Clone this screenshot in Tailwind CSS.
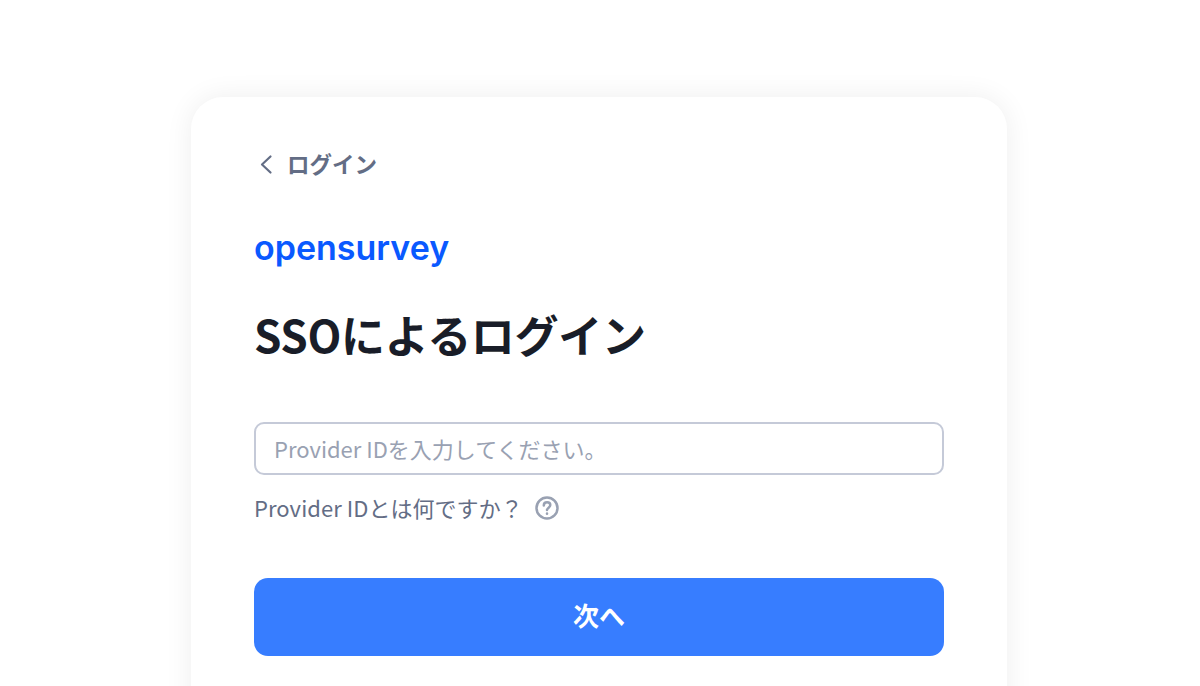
<!DOCTYPE html>
<html lang="ja">
<head>
<meta charset="utf-8">
<title>SSOによるログイン</title>
<script src="https://cdn.jsdelivr.net/npm/@tailwindcss/browser@4"></script>
</head>
<body class="bg-white font-['Noto_Sans_CJK_JP','Noto_Sans',sans-serif] h-[686px] overflow-hidden">
  <div class="flex justify-center pt-[97px] pr-[2px] h-[686px] overflow-hidden">
    <div class="w-[816px] h-[700px] shrink-0 rounded-[32px] bg-white shadow-[0_0_28px_rgba(0,0,0,0.07)] px-[63px] pt-[53px]">
      <a class="flex items-center h-[28px] text-[22.500px] font-bold text-[#636d85]">
        <svg class="w-[24px] h-[24px] mr-[9px]" viewBox="0 0 24 24" fill="none" stroke="#636d85" stroke-width="2.200" stroke-linecap="round" stroke-linejoin="round"><path d="M16.500 4.500 8 12.500 16.500 20.500"/></svg>
        ログイン
      </a>
      <div class="mt-[48px] h-[44px] text-[34px] leading-[44px] font-semibold text-[#0a59ff] font-['Inter',sans-serif]">opensurvey</div>
      <h1 class="mt-[34px] text-[44px] leading-[60px] font-bold tracking-[-0.3px] text-[#191d28]">SSOによるログイン</h1>
      <input class="block mt-[58px] w-[690px] h-[53px] rounded-[10px] border-2 border-[#c5cad8] px-[18px] pb-[2px] text-[22px] text-[#191d28] placeholder:text-[#99a1b2] outline-none" placeholder="Provider IDを入力してください。">
      <div class="flex items-center mt-[16px] h-[32px] text-[22px] tracking-[0.05px] text-[#636d85]">
        Provider IDとは何ですか？
        <svg class="w-[26px] h-[26px] ml-[11px] mt-[2px]" viewBox="0 0 26 26" fill="none" stroke="#99a1b2" stroke-width="2.500" stroke-linecap="round"><circle cx="13" cy="13" r="10.500"/><path d="M9.800 10.500c0-1.900 1.400-3.200 3.300-3.200s3.200 1.200 3.200 2.800c0 2.500-3.300 2.600-3.300 5"/><path d="M13 18.600v.2"/></svg>
      </div>
      <button class="block mt-[55px] w-[690px] h-[78px] rounded-[14px] bg-[#377dff] pb-[5px] text-white text-[26px] font-bold">次へ</button>
    </div>
  </div>
</body>
</html>
